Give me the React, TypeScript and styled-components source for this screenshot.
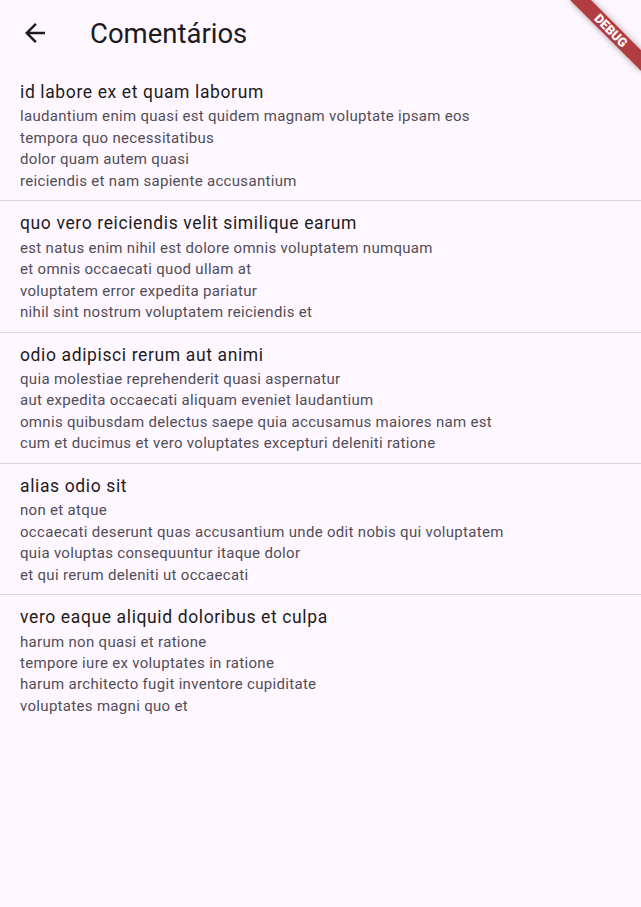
import React from "react";
import styled, { createGlobalStyle } from "styled-components";

const GlobalStyle = createGlobalStyle`
  html, body {
    margin: 0;
    padding: 0;
    background: #fef7ff;
  }
  body {
    font-family: Roboto, "Noto Sans", "Liberation Sans", sans-serif;
    overflow: hidden;
  }
`;

const Screen = styled.div`
  position: relative;
  width: 641px;
  height: 907px;
  background: #fef7ff;
  overflow: hidden;
`;

const AppBar = styled.header`
  display: flex;
  align-items: flex-start;
  height: 70px;
  box-sizing: border-box;
  padding: 18px 0 0 20px;
  gap: 40px;
`;

const BackButton = styled.button`
  display: flex;
  align-items: center;
  justify-content: center;
  width: 30px;
  height: 30px;
  padding: 0;
  border: none;
  background: transparent;
  color: #1d1b20;
  cursor: pointer;
`;

const Title = styled.h1`
  margin: 1px 0 0;
  font-family: Roboto, sans-serif;
  font-weight: 400;
  font-size: 27.5px;
  line-height: 30px;
  color: #1d1b20;
`;

const List = styled.ul`
  list-style: none;
  margin: 0;
  padding: 0;
`;

const Item = styled.li<{ $divider: boolean }>`
  padding: 10px 20px 8.3px 20px;
  border-bottom: ${(p) => (p.$divider ? "1px solid #d8d2db" : "none")};
`;

const ItemTitle = styled.div`
  font-family: Roboto, sans-serif;
  font-size: 17.5px;
  line-height: 24px;
  letter-spacing: 0.625px;
  color: #1d1b20;
`;

const ItemBody = styled.div`
  margin-top: 2.4px;
  font-family: Roboto, sans-serif;
  font-size: 15px;
  line-height: 21.4px;
  letter-spacing: 0.3125px;
  color: #514d57;
  white-space: pre-line;
`;

const Banner = styled.div`
  position: absolute;
  top: 30px;
  left: 611px;
  width: 100px;
  height: 15px;
  margin: -7.5px 0 0 -50px;
  transform: rotate(45deg);
  background: rgba(160, 20, 25, 0.82);
  box-shadow: 0 0 6px rgba(0, 0, 0, 0.35);
  color: #fff;
  font-family: Roboto, sans-serif;
  font-weight: 900;
  font-size: 12.75px;
  line-height: 15px;
  text-align: center;
`;

const comments = [
  {
    title: "id labore ex et quam laborum",
    body: "laudantium enim quasi est quidem magnam voluptate ipsam eos\ntempora quo necessitatibus\ndolor quam autem quasi\nreiciendis et nam sapiente accusantium",
  },
  {
    title: "quo vero reiciendis velit similique earum",
    body: "est natus enim nihil est dolore omnis voluptatem numquam\net omnis occaecati quod ullam at\nvoluptatem error expedita pariatur\nnihil sint nostrum voluptatem reiciendis et",
  },
  {
    title: "odio adipisci rerum aut animi",
    body: "quia molestiae reprehenderit quasi aspernatur\naut expedita occaecati aliquam eveniet laudantium\nomnis quibusdam delectus saepe quia accusamus maiores nam est\ncum et ducimus et vero voluptates excepturi deleniti ratione",
  },
  {
    title: "alias odio sit",
    body: "non et atque\noccaecati deserunt quas accusantium unde odit nobis qui voluptatem\nquia voluptas consequuntur itaque dolor\net qui rerum deleniti ut occaecati",
  },
  {
    title: "vero eaque aliquid doloribus et culpa",
    body: "harum non quasi et ratione\ntempore iure ex voluptates in ratione\nharum architecto fugit inventore cupiditate\nvoluptates magni quo et",
  },
];

export default function App() {
  return (
    <Screen>
      <GlobalStyle />
      <AppBar>
        <BackButton aria-label="Voltar">
          <svg width="30" height="30" viewBox="0 0 24 24" fill="currentColor">
            <path d="M20 11H7.83l5.59-5.59L12 4l-8 8 8 8 1.41-1.41L7.83 13H20v-2z" />
          </svg>
        </BackButton>
        <Title>Comentários</Title>
      </AppBar>
      <List>
        {comments.map((c, i) => (
          <Item key={i} $divider={i < comments.length - 1}>
            <ItemTitle>{c.title}</ItemTitle>
            <ItemBody>{c.body}</ItemBody>
          </Item>
        ))}
      </List>
      <Banner>DEBUG</Banner>
    </Screen>
  );
}
